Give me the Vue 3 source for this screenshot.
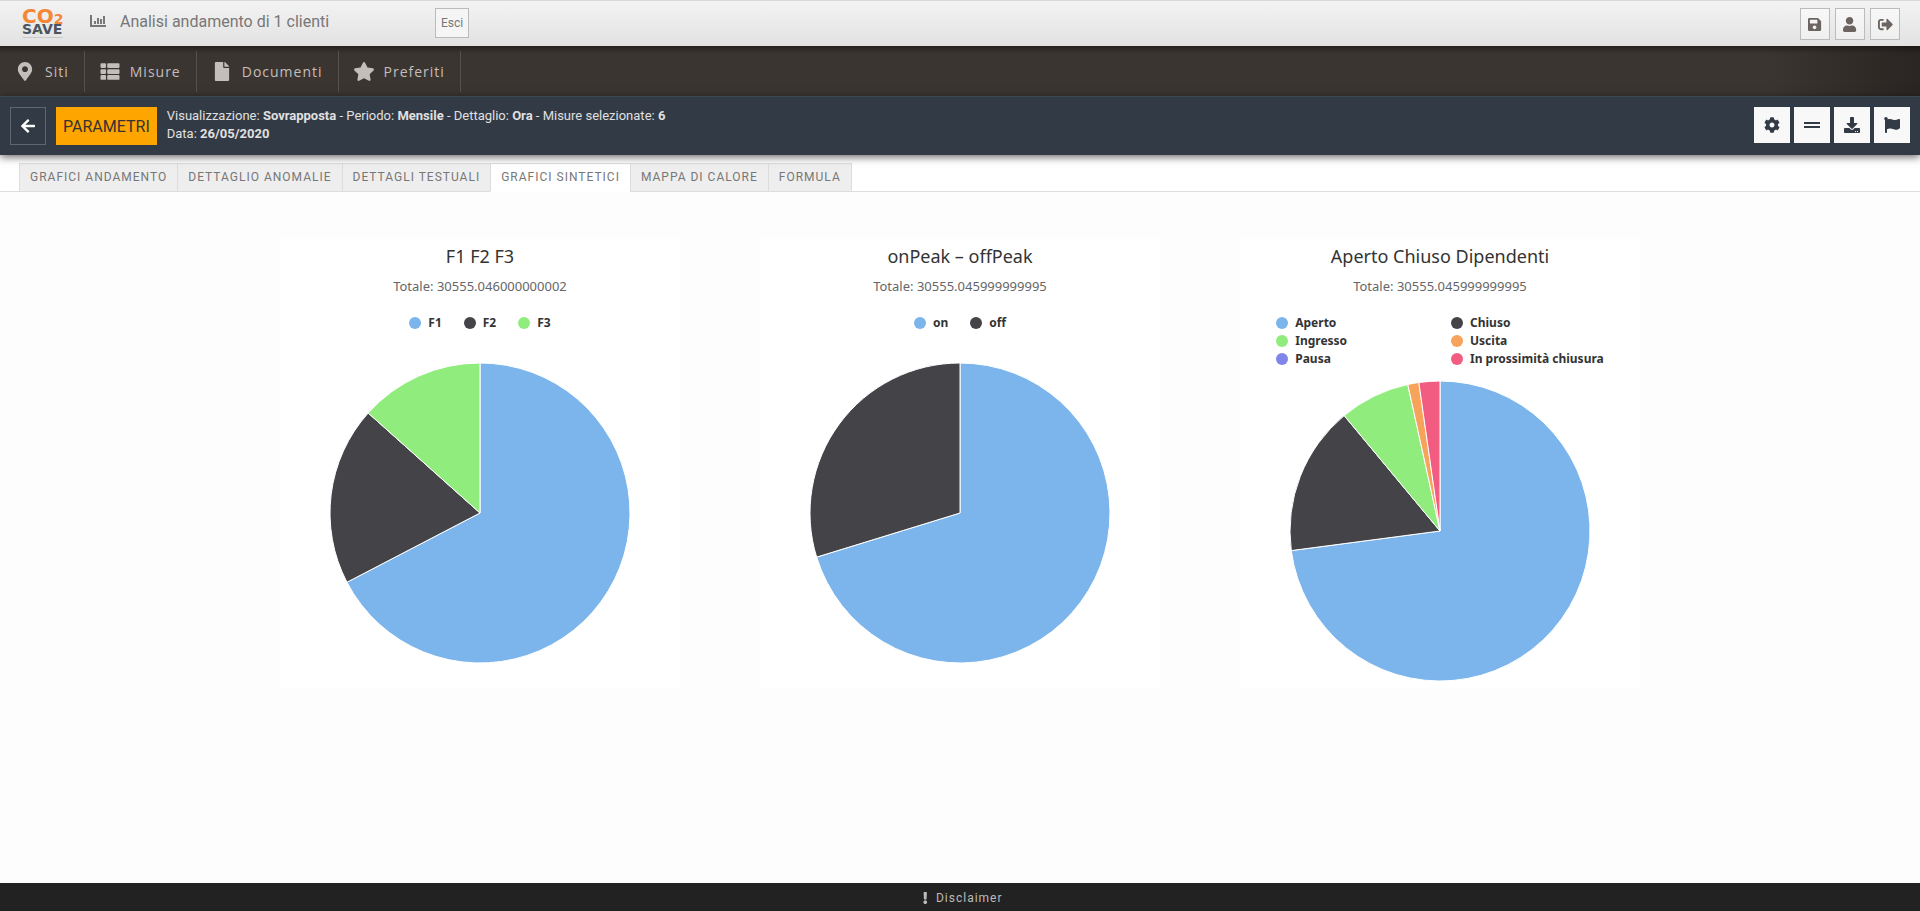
<script setup>
import { ref } from 'vue'

const icons = {
  marker: { w: 384, d: 'M172.268 501.67C26.97 291.031 0 269.413 0 192 0 85.961 85.961 0 192 0s192 85.961 192 192c0 77.413-26.97 99.031-172.268 309.67-9.535 13.774-29.93 13.773-39.464 0zM192 272c44.183 0 80-35.817 80-80s-35.817-80-80-80-80 35.817-80 80 35.817 80 80 80z' },
  list: { w: 512, d: 'M149.333 216v80c0 13.255-10.745 24-24 24H24c-13.255 0-24-10.745-24-24v-80c0-13.255 10.745-24 24-24h101.333c13.255 0 24 10.745 24 24zM0 376v80c0 13.255 10.745 24 24 24h101.333c13.255 0 24-10.745 24-24v-80c0-13.255-10.745-24-24-24H24c-13.255 0-24 10.745-24 24zM125.333 32H24C10.745 32 0 42.745 0 56v80c0 13.255 10.745 24 24 24h101.333c13.255 0 24-10.745 24-24V56c0-13.255-10.745-24-24-24zm80 448H488c13.255 0 24-10.745 24-24v-80c0-13.255-10.745-24-24-24H205.333c-13.255 0-24 10.745-24 24v80c0 13.255 10.745 24 24 24zm-24-424v80c0 13.255 10.745 24 24 24H488c13.255 0 24-10.745 24-24V56c0-13.255-10.745-24-24-24H205.333c-13.255 0-24 10.745-24 24zm24 264H488c13.255 0 24-10.745 24-24v-80c0-13.255-10.745-24-24-24H205.333c-13.255 0-24 10.745-24 24v80c0 13.255 10.745 24 24 24z' },
  file: { w: 384, d: 'M224 136V0H24C10.7 0 0 10.7 0 24v464c0 13.3 10.7 24 24 24h336c13.3 0 24-10.7 24-24V160H248c-13.2 0-24-10.8-24-24zm160-14.1v6.1H256V0h6.1c6.4 0 12.5 2.5 17 7l97.9 98c4.5 4.5 7 10.6 7 16.9z' },
  star: { w: 576, d: 'M259.3 17.8L194 150.2 47.9 171.5c-26.2 3.8-36.7 36.1-17.7 54.6l105.7 103-25 145.5c-4.5 26.3 23.2 46 46.4 33.7L288 439.6l130.7 68.7c23.2 12.2 50.9-7.4 46.4-33.7l-25-145.5 105.7-103c19-18.5 8.5-50.8-17.7-54.6L382 150.2 316.7 17.8c-11.7-23.6-45.6-23.9-57.4 0z' },
  back: { w: 448, d: 'M257.5 445.1l-22.2 22.2c-9.4 9.4-24.6 9.4-33.9 0L7 273c-9.4-9.4-9.4-24.6 0-33.9L201.4 44.7c9.4-9.4 24.6-9.4 33.9 0l22.2 22.2c9.5 9.5 9.3 25-.4 34.3L136.6 216H424c13.3 0 24 10.7 24 24v32c0 13.3-10.7 24-24 24H136.6l120.5 114.8c9.8 9.3 10 24.8.4 34.3z' },
  save: { w: 448, d: 'M433.941 129.941l-83.882-83.882A48 48 0 0 0 316.118 32H48C21.49 32 0 53.49 0 80v352c0 26.51 21.49 48 48 48h352c26.51 0 48-21.49 48-48V163.882a48 48 0 0 0-14.059-33.941zM224 416c-35.346 0-64-28.654-64-64 0-35.346 28.654-64 64-64s64 28.654 64 64c0 35.346-28.654 64-64 64zm96-304.52V212c0 6.627-5.373 12-12 12H76c-6.627 0-12-5.373-12-12V108c0-6.627 5.373-12 12-12h228.52c3.183 0 6.235 1.264 8.485 3.515l3.48 3.48A11.996 11.996 0 0 1 320 111.48z' },
  user: { w: 448, d: 'M224 256c70.7 0 128-57.3 128-128S294.7 0 224 0 96 57.3 96 128s57.3 128 128 128zm89.6 32h-16.7c-22.2 10.2-46.9 16-72.9 16s-50.6-5.8-72.9-16h-16.7C60.2 288 0 348.2 0 422.4V464c0 26.5 21.5 48 48 48h352c26.5 0 48-21.5 48-48v-41.6c0-74.2-60.2-134.4-134.4-134.4z' },
  exit: { w: 512, d: 'M497 273L329 441c-15 15-41 4.5-41-17v-96H152c-13.3 0-24-10.7-24-24v-96c0-13.3 10.7-24 24-24h136V88c0-21.4 25.9-32 41-17l168 168c9.3 9.4 9.3 24.6 0 34zM192 436v-40c0-6.6-5.4-12-12-12H96c-17.7 0-32-14.3-32-32V160c0-17.7 14.3-32 32-32h84c6.6 0 12-5.4 12-12V76c0-6.6-5.4-12-12-12H96c-53 0-96 43-96 96v192c0 53 43 96 96 96h84c6.6 0 12-5.4 12-12z' },
  cog: { w: 512, d: 'M487.4 315.7l-42.6-24.6c4.3-23.2 4.3-47 0-70.2l42.6-24.6c4.9-2.8 7.1-8.6 5.5-14-11.1-35.6-30-67.8-54.7-94.6-3.8-4.1-10-5.1-14.8-2.3L380.8 110c-17.9-15.4-38.5-27.3-60.8-35.1V25.8c0-5.6-3.9-10.5-9.4-11.7-36.7-8.2-74.3-7.8-109.2 0-5.5 1.2-9.4 6.1-9.4 11.7V75c-22.2 7.9-42.8 19.8-60.8 35.1L88.7 85.5c-4.9-2.8-11-1.9-14.8 2.3-24.7 26.7-43.6 58.9-54.7 94.6-1.7 5.4.6 11.2 5.5 14L67.3 221c-4.3 23.2-4.3 47 0 70.2l-42.6 24.6c-4.9 2.8-7.1 8.6-5.5 14 11.1 35.6 30 67.8 54.7 94.6 3.8 4.1 10 5.1 14.8 2.3l42.6-24.6c17.9 15.4 38.5 27.3 60.8 35.1v49.2c0 5.6 3.9 10.5 9.4 11.7 36.7 8.2 74.3 7.8 109.2 0 5.5-1.2 9.4-6.1 9.4-11.7v-49.2c22.2-7.9 42.8-19.8 60.8-35.1l42.6 24.6c4.9 2.8 11 1.9 14.8-2.3 24.7-26.7 43.6-58.9 54.7-94.6 1.5-5.5-.7-11.3-5.6-14.1zM256 336c-44.1 0-80-35.9-80-80s35.9-80 80-80 80 35.9 80 80-35.9 80-80 80z' },
  lines: { w: 512, d: 'M0 160h512v64H0zM0 288h512v64H0z' },
  download: { w: 512, d: 'M216 0h80c13.3 0 24 10.7 24 24v168h87.7c17.8 0 26.7 21.5 14.1 34.1L269.7 378.3c-7.5 7.5-19.8 7.5-27.3 0L90.1 226.1c-12.6-12.6-3.7-34.1 14.1-34.1H192V24c0-13.3 10.7-24 24-24zm296 376v112c0 13.3-10.7 24-24 24H24c-13.3 0-24-10.7-24-24V376c0-13.3 10.7-24 24-24h146.7l49 49c20.1 20.1 52.5 20.1 72.6 0l49-49H488c13.3 0 24 10.7 24 24zm-124 88c0-11-9-20-20-20s-20 9-20 20 9 20 20 20 20-9 20-20zm64 0c0-11-9-20-20-20s-20 9-20 20 9 20 20 20 20-9 20-20z' },
  flag: { w: 512, d: 'M349.565 98.783C295.978 98.783 251.721 64 184.348 64c-24.955 0-47.309 4.384-68.045 12.013a55.947 55.947 0 0 0 3.586-23.562C118.117 24.015 94.806 1.206 66.338.048 34.345-1.254 8 24.296 8 56c0 19.026 9.497 35.825 24 45.945V488c0 13.255 10.745 24 24 24h16c13.255 0 24-10.745 24-24v-94.4c28.311-12.064 63.582-22.122 114.435-22.122 53.588 0 97.844 34.783 165.217 34.783 48.169 0 86.667-16.294 122.505-40.858C506.84 359.452 512 349.571 512 339.045v-243.1c0-23.393-24.269-38.87-45.485-29.016-34.338 15.948-76.454 31.854-116.95 31.854z' },
  alert: { w: 192, d: 'M176 432c0 44.112-35.888 80-80 80s-80-35.888-80-80 35.888-80 80-80 80 35.888 80 80zM25.26 25.199l13.6 272C39.499 309.972 50.041 320 62.83 320h66.34c12.789 0 23.331-10.028 23.97-22.801l13.6-272C167.425 11.49 156.496 0 142.77 0H49.23C35.504 0 24.575 11.49 25.26 25.199z' }
}
const box = (name) => `0 0 ${icons[name].w} 512`

const userActions = [
  { icon: 'save', label: 'Salva' },
  { icon: 'user', label: 'Utente' },
  { icon: 'exit', label: 'Disconnetti' }
]
const menu = [
  { icon: 'marker', label: 'Siti' },
  { icon: 'list', label: 'Misure' },
  { icon: 'file', label: 'Documenti' },
  { icon: 'star', label: 'Preferiti' }
]
const tools = [
  { icon: 'cog', label: 'Impostazioni' },
  { icon: 'lines', label: 'Righe' },
  { icon: 'download', label: 'Scarica' },
  { icon: 'flag', label: 'Segnala' }
]
const tabs = ['GRAFICI ANDAMENTO', 'DETTAGLIO ANOMALIE', 'DETTAGLI TESTUALI', 'GRAFICI SINTETICI', 'MAPPA DI CALORE', 'FORMULA']
const active = ref(3)

// "end" is the clockwise angle, in degrees from the top, where a slice stops
const charts = [
  {
    title: 'F1 F2 F3',
    total: '30555.046000000002',
    slices: [
      { name: 'F1', color: '#7cb5ec', end: 242.5 },
      { name: 'F2', color: '#434348', end: 311.8 },
      { name: 'F3', color: '#90ed7d', end: 360 }
    ]
  },
  {
    title: 'onPeak – offPeak',
    total: '30555.045999999995',
    slices: [
      { name: 'on', color: '#7cb5ec', end: 252.9 },
      { name: 'off', color: '#434348', end: 360 }
    ]
  },
  {
    title: 'Aperto Chiuso Dipendenti',
    total: '30555.045999999995',
    columns: true,
    slices: [
      { name: 'Aperto', color: '#7cb5ec', end: 262.5 },
      { name: 'Chiuso', color: '#434348', end: 320.3 },
      { name: 'Ingresso', color: '#90ed7d', end: 347.6 },
      { name: 'Uscita', color: '#f7a35c', end: 351.9 },
      { name: 'Pausa', color: '#8085e9', end: 351.9 },
      { name: 'In prossimità chiusura', color: '#f15c80', end: 360 }
    ]
  }
]

const R = 150
const point = (deg) => {
  const a = (deg * Math.PI) / 180
  return `${(R + R * Math.sin(a)).toFixed(2)} ${(R - R * Math.cos(a)).toFixed(2)}`
}
const sectors = (chart) =>
  chart.slices
    .map((s, i) => ({ ...s, start: i ? chart.slices[i - 1].end : 0 }))
    .filter((s) => s.end > s.start)
    .map((s) => ({
      name: s.name,
      color: s.color,
      d: `M${R} ${R}L${point(s.start)}A${R} ${R} 0 ${s.end - s.start > 180 ? 1 : 0} 1 ${point(s.end)}Z`
    }))
</script>

<template>
  <div class="page">
    <header class="topbar">
      <svg class="logo" viewBox="0 0 44 32" role="img" aria-label="CO2 Save">
        <text class="logo-co" x="0" y="15">CO<tspan class="logo-two" dy="1">2</tspan></text>
        <text class="logo-save" x="0" y="26">SAVE</text>
        <circle cx="17" cy="24" r="1" fill="#8dc63f" />
        <text class="logo-tag" x="0" y="30">L'OFFICINA DEL RISPARMIO ENERGETICO</text>
      </svg>
      <svg class="chart-icon" viewBox="0 0 16 12" aria-hidden="true">
        <path d="M0 0h2v10h14v2H0zM4 6h2v3H4zM7 3h2v6H7zM10 4h2v5h-2zM13 1h2v8h-2z" />
      </svg>
      <h1>Analisi andamento di 1 clienti</h1>
      <button class="leave" type="button">Esci</button>
      <div class="user-actions">
        <button v-for="a in userActions" :key="a.icon" type="button" :aria-label="a.label">
          <svg :viewBox="box(a.icon)" aria-hidden="true"><path :d="icons[a.icon].d" /></svg>
        </button>
      </div>
    </header>

    <nav class="menu">
      <a v-for="m in menu" :key="m.label" href="#">
        <svg :viewBox="box(m.icon)" aria-hidden="true"><path :d="icons[m.icon].d" /></svg>
        <span>{{ m.label }}</span>
      </a>
    </nav>

    <section class="params">
      <button class="back" type="button" aria-label="Indietro">
        <svg :viewBox="box('back')" aria-hidden="true"><path :d="icons.back.d" /></svg>
      </button>
      <button class="param-button" type="button">PARAMETRI</button>
      <div class="summary">
        <p>Visualizzazione: <b>Sovrapposta</b> - Periodo: <b>Mensile</b> - Dettaglio: <b>Ora</b> - Misure selezionate: <b>6</b></p>
        <p>Data: <b>26/05/2020</b></p>
      </div>
      <div class="tools">
        <button v-for="t in tools" :key="t.icon" type="button" :aria-label="t.label">
          <svg :viewBox="box(t.icon)" aria-hidden="true"><path :d="icons[t.icon].d" /></svg>
        </button>
      </div>
    </section>

    <div class="tabs" role="tablist">
      <button
        v-for="(t, i) in tabs"
        :key="t"
        type="button"
        role="tab"
        :aria-selected="i === active"
        :class="{ active: i === active }"
        @click="active = i"
      >{{ t }}</button>
    </div>

    <main class="charts">
      <article v-for="c in charts" :key="c.title" class="card">
        <h2>{{ c.title }}</h2>
        <p class="total">Totale: {{ c.total }}</p>
        <ul class="legend" :class="{ columns: c.columns }">
          <li v-for="s in c.slices" :key="s.name">
            <svg viewBox="0 0 12 12" aria-hidden="true"><circle cx="6" cy="6" r="6" :fill="s.color" /></svg>
            <span>{{ s.name }}</span>
          </li>
        </ul>
        <svg class="pie" viewBox="0 0 300 300" role="img" :aria-label="c.title">
          <path v-for="s in sectors(c)" :key="s.name" :d="s.d" :fill="s.color" />
        </svg>
      </article>
    </main>

    <footer class="footer">
      <a href="#">
        <svg :viewBox="box('alert')" aria-hidden="true"><path :d="icons.alert.d" /></svg>
        <span>Disclaimer</span>
      </a>
    </footer>
  </div>
</template>

<style>
body {
  margin: 0;
  background: #fdfdfd;
}
</style>

<style scoped>
.page {
  min-height: 100vh;
  display: flex;
  flex-direction: column;
  font-family: Roboto, "Liberation Sans", sans-serif;
  font-size: 12px;
}
.page * {
  box-sizing: border-box;
}
button {
  font-family: inherit;
  font-size: 12px;
  padding: 0;
  cursor: pointer;
}
svg {
  display: block;
  fill: currentColor;
}
h1, h2, p, ul {
  margin: 0;
  padding: 0;
  font-weight: 400;
}
a {
  color: inherit;
  text-decoration: none;
}

.topbar {
  display: flex;
  align-items: flex-start;
  height: 46px;
  padding: 7px 20px 0 22px;
  border-top: 1px solid #d8d8d8;
  background: linear-gradient(#f3f3f3, #e2e2e2);
  color: #777;
}
.logo {
  width: 44px;
  height: 32px;
  overflow: visible;
}
.logo-co {
  font: 700 20px "DejaVu Sans", sans-serif;
  fill: #f58634;
}
.logo-two {
  font-size: 14px;
}
.logo-save {
  font: 700 14px "DejaVu Sans", sans-serif;
  fill: #4a5560;
}
.logo-tag {
  font: 2px "Liberation Sans", sans-serif;
  fill: #999;
}
.chart-icon {
  width: 16px;
  height: 12px;
  margin: 7px 14px 0 24px;
}
h1 {
  width: 315px;
  font-size: 16px;
  line-height: 27px;
}
.leave {
  width: 34px;
  height: 30px;
  border: 1px solid #bbb;
  background: #f5f5f5;
  color: #777;
}
.user-actions {
  display: flex;
  gap: 5px;
  margin-left: auto;
}
.user-actions button {
  display: grid;
  place-items: center;
  width: 30px;
  height: 32px;
  border: 1px solid #bbb;
  background: linear-gradient(#f8f8f8, #efefef);
  color: #6b6460;
}
.user-actions svg {
  height: 15px;
}

.menu {
  display: flex;
  height: 50px;
  padding-top: 5px;
  background:
    linear-gradient(rgba(0, 0, 0, 0.35), transparent 8px),
    linear-gradient(90deg, #3b3532 92%, #2a2522);
  color: #c4beba;
  font-family: "Open Sans", "Noto Sans", sans-serif;
  font-size: 14px;
  letter-spacing: 1px;
}
.menu a {
  display: flex;
  align-items: center;
  gap: 9px;
  height: 41px;
  padding: 0 15px 0 14px;
  border-right: 1px solid #555150;
}
.menu svg {
  width: 22px;
  height: 19px;
}

.params {
  position: relative;
  display: flex;
  height: 59px;
  padding: 10px 10px 0;
  border-top: 1px solid #3a4854;
  background: #323a45;
  color: #e0e0e0;
  box-shadow: 0 2px 8px rgba(0, 0, 0, 0.6);
}
.back {
  display: grid;
  place-items: center;
  width: 36px;
  height: 38px;
  margin-right: 10px;
  border: 1px solid #5d6874;
  background: none;
  color: #fff;
}
.back svg {
  height: 16px;
}
.param-button {
  height: 38px;
  padding: 0 7px;
  border: 0;
  background: #ffa500;
  color: #333;
  font-size: 16px;
}
.summary {
  margin-left: 10px;
  font-size: 13px;
  line-height: 18px;
}
.tools {
  display: flex;
  gap: 4px;
  margin-left: auto;
}
.tools button {
  display: grid;
  place-items: center;
  width: 36px;
  height: 36px;
  border: 0;
  background: #f8f8f8;
  color: #323a45;
}
.tools svg {
  height: 16px;
}

.tabs {
  display: flex;
  padding: 8px 0 0 19px;
  background: #fff;
  box-shadow: inset 0 -1px #ddd;
}
.tabs button {
  height: 29px;
  padding: 0 10px 2px;
  border: 1px solid #ddd;
  border-right: 0;
  background: #eee;
  color: #777;
  letter-spacing: 1px;
}
.tabs button:last-child {
  border-right: 1px solid #ddd;
}
.tabs .active {
  border-bottom-color: #fff;
  background: #fff;
}

.charts {
  flex: 1;
  display: grid;
  grid-template-columns: repeat(3, 1fr);
  align-items: start;
  padding: 47px 12.5% 40px;
  font-family: "Noto Sans", "Open Sans", sans-serif;
}
.card {
  min-height: 449px;
  margin: 0 40px;
  background: #fff;
  color: #333;
  text-align: center;
}
h2 {
  padding-top: 4px;
  font-size: 18px;
  line-height: 26px;
}
.total {
  margin-top: 8px;
  color: #666;
  font-size: 13px;
  line-height: 18px;
}
.legend {
  display: flex;
  justify-content: center;
  gap: 22px;
  margin: 19px 0 31px;
  list-style: none;
  font-weight: 700;
}
.legend.columns {
  display: grid;
  grid-template-columns: 1fr 1fr;
  gap: 0 22px;
  width: fit-content;
  margin: 19px auto 13px;
}
.legend li {
  display: flex;
  align-items: center;
  gap: 7px;
  line-height: 18px;
}
.legend svg {
  width: 12px;
  height: 12px;
}
.pie {
  width: 300px;
  height: 300px;
  margin: 0 auto;
  stroke: #fff;
  stroke-width: 1px;
  stroke-linejoin: round;
}

.footer {
  display: flex;
  justify-content: center;
  align-items: center;
  height: 28px;
  padding: 2px 0 0 6px;
  background: #222;
  color: #bbb;
  letter-spacing: 1px;
}
.footer a {
  display: flex;
  align-items: center;
  gap: 8px;
}
.footer svg {
  height: 12px;
}
</style>
